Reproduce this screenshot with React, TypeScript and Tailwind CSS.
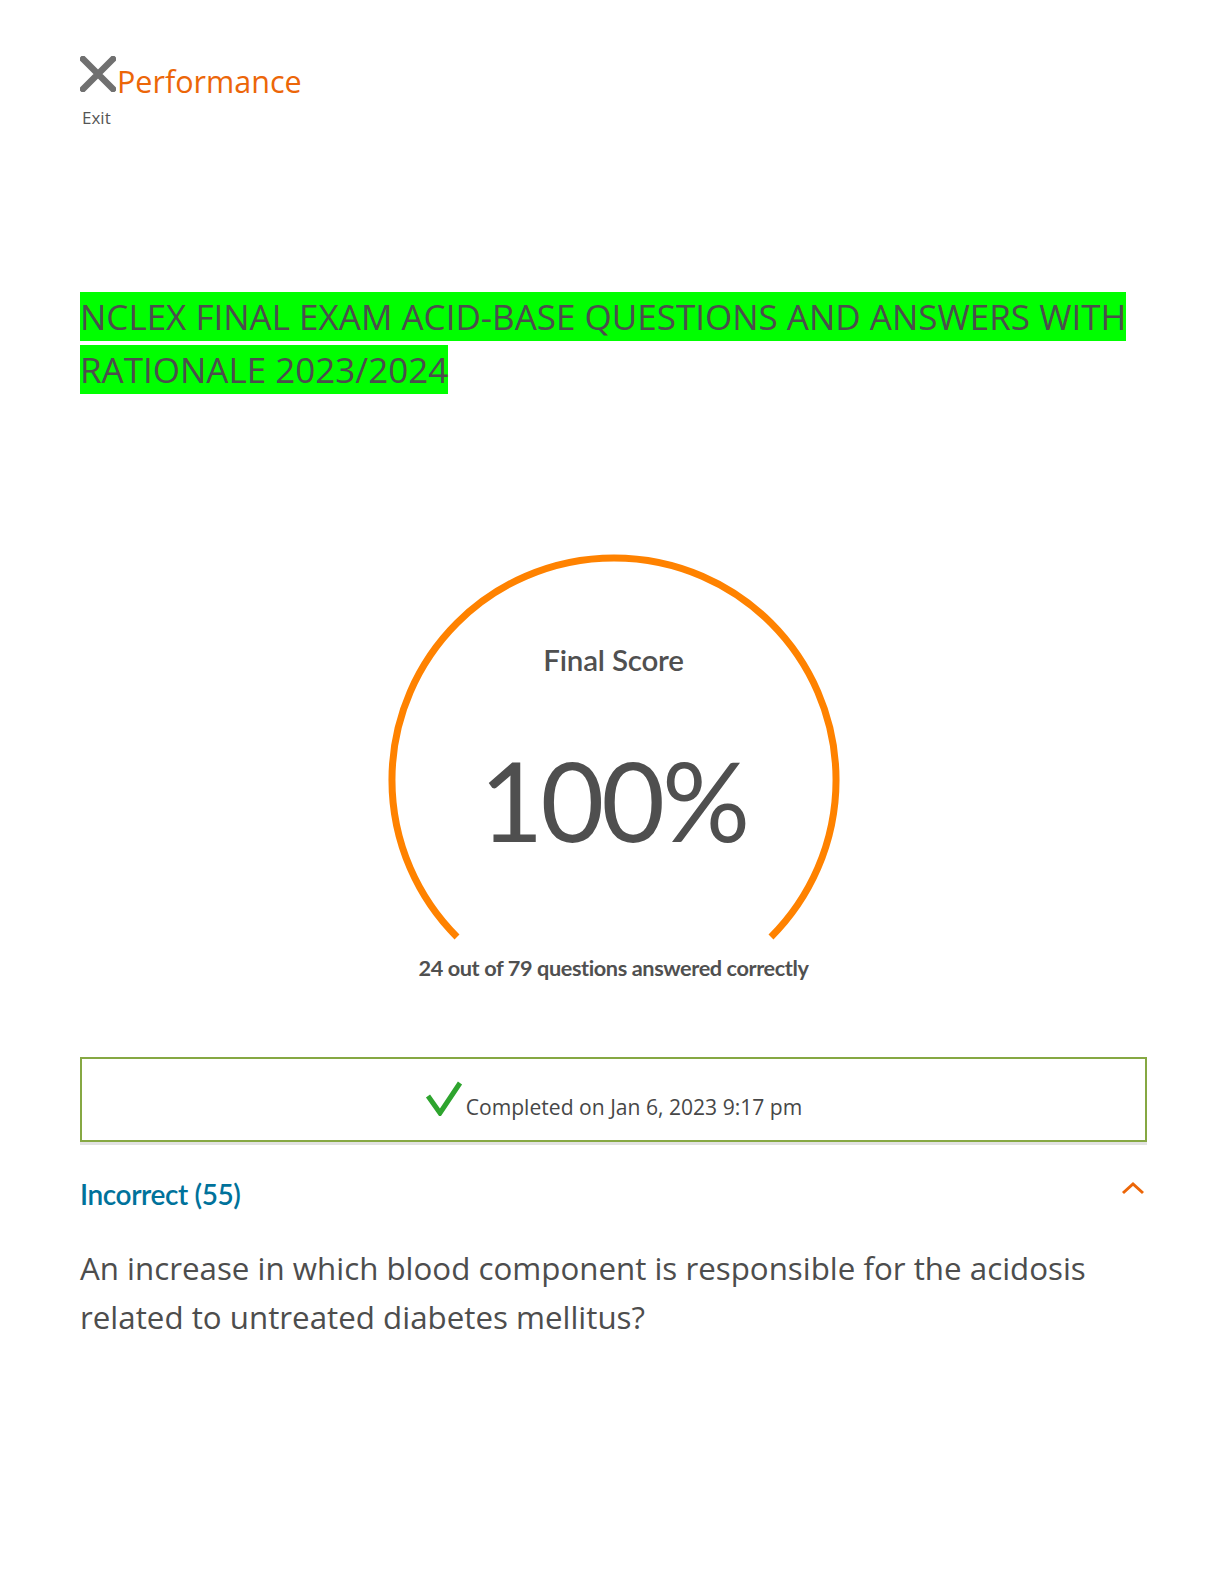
import React from "react";

const cal = { fontFamily: "Lato, 'Open Sans', sans-serif" } as React.CSSProperties;

export default function App() {
  return (
    <div className="w-[1224px] min-h-[1584px] bg-white pl-[80px] pr-[77px] pt-[56px] text-[#4d4d4d]">
      <div className="flex items-end">
        <svg width="36" height="36" viewBox="0 0 36 36" className="shrink-0">
          <path d="M3 3 L33 33 M33 3 L3 33" stroke="#707070" strokeWidth="6.5" strokeLinecap="round" />
        </svg>
        <span className="text-[30.5px] leading-[36px] text-[#ec6608] -mb-[7px] ml-[1px] font-['Open_Sans',sans-serif]">
          Performance
        </span>
      </div>
      <div className="mt-[15px] ml-[2px] text-[17px] leading-[22px] text-[#555555] font-['Open_Sans',sans-serif]">Exit</div>

      <h1 className="mt-[161px] text-[35px] leading-[53px] font-normal text-[#4d4d4d] font-['Open_Sans',sans-serif] w-[1060px]">
        <span className="bg-[#00ff00] py-[1px]">NCLEX FINAL EXAM ACID-BASE QUESTIONS AND ANSWERS WITH RATIONALE 2023/2024</span>
      </h1>

      <div className="mt-[154px] flex justify-center">
        <div className="grid w-[460px] h-[460px]">
          <svg width="460" height="460" viewBox="0 0 460 460" className="[grid-area:1/1]">
            <path d="M 73 387 A 222 222 0 1 1 387 387" fill="none" stroke="#ff8200" strokeWidth="7" />
          </svg>
          <div className="[grid-area:1/1] flex flex-col items-center pt-[93px]">
            <div style={cal} className="text-[29.5px] leading-[34px] font-semibold text-[#505050] tracking-[-0.2px]">Final Score</div>
            <div style={cal} className="mt-[63px] text-[110px] leading-[118px] text-[#4f4f4f] tracking-[-3px]">100%</div>
            <div style={cal} className="mt-[97px] text-[21.7px] leading-[26px] font-bold text-[#505050] tracking-[-0.4px]">
              24 out of 79 questions answered correctly
            </div>
          </div>
        </div>
      </div>

      <div className="mt-[47px] border-2 border-[#86a843] h-[85px] flex items-center justify-center shadow-[0_3px_0_#e2e2e2]">
        <div className="flex items-end pt-[2px]">
          <svg width="38" height="36" viewBox="0 0 38 36" className="mb-[5px]">
            <path d="M3 16 L15 33 L35 3" fill="none" stroke="#2ea42e" strokeWidth="5" />
          </svg>
          <span className="ml-[3px] text-[21.1px] leading-[28px] text-[#474747] font-['Open_Sans',sans-serif]">
            Completed on Jan 6, 2023 9:17 pm
          </span>
        </div>
      </div>

      <div className="mt-[35px] flex items-start justify-between">
        <div style={cal} className="text-[28px] leading-[34px] font-semibold text-[#00729b] tracking-[-0.4px]">Incorrect (55)</div>
        <svg width="24" height="14" viewBox="0 0 24 14" className="mt-[4px] mr-[2px]">
          <path d="M2 12 L12 3 L22 12" fill="none" stroke="#ec6608" strokeWidth="3" />
        </svg>
      </div>

      <p className="mt-[33px] text-[31.3px] leading-[49px] text-[#4d4d4d] w-[1050px] font-['Open_Sans',sans-serif]">
        An increase in which blood component is responsible for the acidosis related to untreated diabetes mellitus?
      </p>
    </div>
  );
}
